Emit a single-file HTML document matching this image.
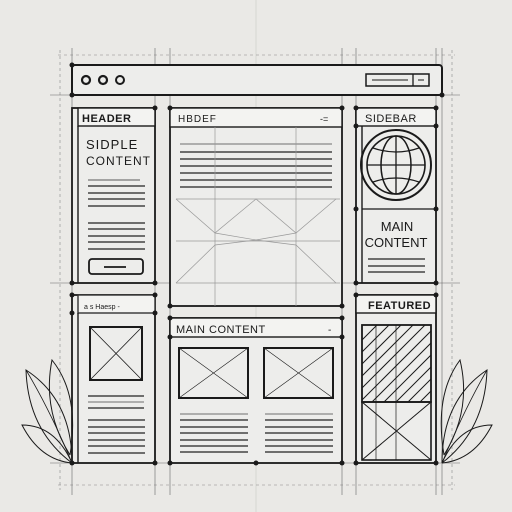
<!DOCTYPE html>
<html><head><meta charset="utf-8"><style>
html,body{margin:0;padding:0;background:#eae9e6}
svg{display:block}
text{font-family:"Liberation Sans",sans-serif;fill:#1a1a1a}
</style></head><body>
<svg width="512" height="512" viewBox="0 0 512 512" xmlns="http://www.w3.org/2000/svg">
<rect width="512" height="512" fill="#eae9e6"/>
<g stroke="#d2d1ce" stroke-width="0.8">
<line x1="256" y1="0" x2="256" y2="512"/>
</g>
<g stroke="#888" stroke-width="0.6" stroke-dasharray="3,3" fill="none">
<line x1="58" y1="55" x2="455" y2="55"/><line x1="58" y1="485" x2="455" y2="485"/>
<line x1="60" y1="50" x2="60" y2="490"/><line x1="452" y1="50" x2="452" y2="490"/>
</g>
<g stroke="#666" stroke-width="0.6" fill="none">
<line x1="72" y1="48" x2="72" y2="495"/><line x1="442" y1="48" x2="442" y2="495"/>
<line x1="170" y1="48" x2="170" y2="495"/><line x1="342" y1="48" x2="342" y2="495"/>
<line x1="356" y1="48" x2="356" y2="495"/><line x1="436" y1="48" x2="436" y2="495"/>
<line x1="155" y1="48" x2="155" y2="495"/>
<line x1="50" y1="95" x2="460" y2="95"/><line x1="50" y1="283" x2="460" y2="283"/>
<line x1="50" y1="463" x2="460" y2="463"/>
</g>
<g stroke="#1a1a1a" fill="none">
<rect x="72" y="65" width="370" height="30" rx="3" stroke-width="2" fill="#ededeb"/>
<circle cx="86" cy="80" r="4" stroke-width="2.2"/><circle cx="103" cy="80" r="4" stroke-width="2.2"/><circle cx="120" cy="80" r="4" stroke-width="2"/>
<rect x="366" y="74" width="63" height="12" stroke-width="1.5"/><line x1="413" y1="74" x2="413" y2="86" stroke-width="1.3"/>
<line x1="372" y1="80" x2="408" y2="80"/><line x1="418" y1="80" x2="424" y2="80"/>
</g>
<g stroke="#1a1a1a" stroke-width="1.8" fill="#ededeb">
<rect x="72" y="108" width="83" height="175"/>
<rect x="170" y="108" width="172" height="198"/>
<rect x="356" y="108" width="80" height="175"/>
<rect x="72" y="295" width="83" height="168"/>
<rect x="170" y="318" width="172" height="145"/>
<rect x="356" y="295" width="80" height="168"/>
</g>
<g stroke="#1a1a1a" stroke-width="1.4" fill="#f3f3f1">
<rect x="78" y="108" width="77" height="18"/>
<rect x="170" y="108" width="172" height="19"/>
<rect x="356" y="108" width="80" height="18"/>
<rect x="78" y="295" width="77" height="18" stroke="#333"/>
<rect x="170" y="318" width="172" height="19"/>
<rect x="356" y="295" width="80" height="18"/>
</g>
<g stroke="#1a1a1a" stroke-width="1.4"><line x1="78" y1="126" x2="78" y2="283"/><line x1="78" y1="313" x2="78" y2="463"/><line x1="362" y1="126" x2="362" y2="283"/></g>
<text x="82" y="122" font-size="11" font-weight="bold" letter-spacing="0.5">HEADER</text>
<text x="86" y="149" font-size="13" fill="#444" letter-spacing="1">SIDPLE</text>
<text x="86" y="165" font-size="12" fill="#aaa" letter-spacing="1">CONTENT</text>
<text x="178" y="122" font-size="10" fill="#333" letter-spacing="1">HBDEF</text>
<text x="320" y="122" font-size="9">-=</text>
<text x="365" y="122" font-size="11" letter-spacing="0.5">SIDEBAR</text>
<text x="397" y="231" font-size="13" text-anchor="middle">MAIN</text>
<text x="396" y="247" font-size="13" text-anchor="middle">CONTENT</text>
<text x="84" y="309" font-size="7" fill="#888">a s Haesp    -</text>
<text x="368" y="309" font-size="11" font-weight="bold" letter-spacing="0.5">FEATURED</text>
<text x="176" y="333" font-size="11" letter-spacing="0.5">MAIN CONTENT</text>
<text x="328" y="333" font-size="10">-</text>
<g stroke="#222" stroke-width="1.3">
<line x1="88" y1="180" x2="140" y2="180" stroke="#777"/><line x1="88" y1="186" x2="145" y2="186"/><line x1="88" y1="193" x2="145" y2="193"/><line x1="88" y1="199" x2="145" y2="199"/><line x1="88" y1="206" x2="145" y2="206"/>
<line x1="88" y1="223" x2="145" y2="223"/><line x1="88" y1="229" x2="145" y2="229"/><line x1="88" y1="236" x2="145" y2="236"/><line x1="88" y1="242" x2="145" y2="242"/><line x1="88" y1="249" x2="145" y2="249"/>
</g>
<rect x="89" y="259" width="54" height="15" rx="3" fill="none" stroke="#1a1a1a" stroke-width="1.8"/>
<line x1="104" y1="267" x2="126" y2="267" stroke="#1a1a1a" stroke-width="1.8"/>
<g stroke="#222" stroke-width="1.2">
<line x1="180" y1="144" x2="332" y2="144" stroke="#888"/>
<line x1="180" y1="152" x2="332" y2="152"/><line x1="180" y1="159" x2="332" y2="159"/><line x1="180" y1="166" x2="332" y2="166"/><line x1="180" y1="173" x2="332" y2="173"/><line x1="180" y1="180" x2="332" y2="180"/><line x1="180" y1="187" x2="332" y2="187"/>
</g>
<g stroke="#999" stroke-width="0.7" fill="none">
<line x1="215" y1="127" x2="215" y2="306"/><line x1="296" y1="127" x2="296" y2="306"/>
<line x1="176" y1="199" x2="340" y2="199"/><line x1="176" y1="241" x2="340" y2="241"/><line x1="176" y1="283" x2="340" y2="283"/>
<path d="M176 199 L215 233 L256 199 L296 233 L336 199"/><path d="M176 283 L215 245 L256 240 L296 245 L336 283"/>
<path d="M215 233 L256 240 L296 233"/>
</g>
<g stroke="#1a1a1a" fill="none">
<circle cx="396" cy="165" r="35" stroke-width="2"/><circle cx="396" cy="165" r="29" stroke-width="1.6"/>
<ellipse cx="396" cy="165" rx="15" ry="29" stroke-width="1.5"/>
<line x1="396" y1="136" x2="396" y2="194" stroke-width="1.3"/>
<line x1="367" y1="165" x2="425" y2="165" stroke-width="1.3"/>
<path d="M373 148 Q396 156 419 148" stroke-width="1.2"/><path d="M373 182 Q396 174 419 182" stroke-width="1.2"/>
</g>
<line x1="362" y1="209" x2="436" y2="209" stroke="#1a1a1a" stroke-width="1.3"/>
<g stroke="#222" stroke-width="1.3"><line x1="368" y1="259" x2="425" y2="259"/><line x1="368" y1="266" x2="425" y2="266"/><line x1="368" y1="272" x2="425" y2="272"/></g>
<g stroke="#1a1a1a" fill="none">
<rect x="90" y="327" width="52" height="53" stroke-width="2"/><path d="M90 327 L142 380 M142 327 L90 380" stroke-width="0.8"/>
<rect x="179" y="348" width="69" height="50" stroke-width="2"/><path d="M179 348 L248 398 M248 348 L179 398" stroke-width="0.6"/>
<rect x="264" y="348" width="69" height="50" stroke-width="2"/><path d="M264 348 L333 398 M333 348 L264 398" stroke-width="0.6"/>
</g>
<g stroke="#222" stroke-width="1.2">
<line x1="88" y1="396" x2="144" y2="396"/><line x1="88" y1="402" x2="144" y2="402" stroke="#888"/><line x1="88" y1="408" x2="144" y2="408"/>
<line x1="88" y1="420" x2="145" y2="420"/><line x1="88" y1="427" x2="145" y2="427"/><line x1="88" y1="433" x2="145" y2="433"/><line x1="88" y1="440" x2="145" y2="440"/><line x1="88" y1="446" x2="145" y2="446"/><line x1="88" y1="453" x2="145" y2="453"/>
<line x1="180" y1="414" x2="248" y2="414" stroke="#888"/><line x1="180" y1="420" x2="248" y2="420"/><line x1="180" y1="427" x2="248" y2="427"/><line x1="180" y1="433" x2="248" y2="433"/><line x1="180" y1="440" x2="248" y2="440"/><line x1="180" y1="446" x2="248" y2="446"/><line x1="180" y1="452" x2="248" y2="452"/>
<line x1="265" y1="414" x2="333" y2="414" stroke="#888"/><line x1="265" y1="420" x2="333" y2="420"/><line x1="265" y1="427" x2="333" y2="427"/><line x1="265" y1="433" x2="333" y2="433"/><line x1="265" y1="440" x2="333" y2="440"/><line x1="265" y1="446" x2="333" y2="446"/><line x1="265" y1="452" x2="333" y2="452"/>
</g>
<g stroke="#1a1a1a" fill="none">
<rect x="362" y="325" width="69" height="77" stroke-width="1.8"/>
<rect x="362" y="402" width="69" height="58" stroke-width="1.6"/>
<path d="M362 402 L431 460 M431 402 L362 460" stroke-width="1"/>
<line x1="376" y1="325" x2="376" y2="460" stroke-width="0.7"/><line x1="396" y1="325" x2="396" y2="460" stroke-width="0.7"/>
</g>
<clipPath id="h"><rect x="362" y="325" width="69" height="77"/></clipPath>
<g clip-path="url(#h)" stroke="#1a1a1a" stroke-width="1">
<path d="M362 340 L377 325 M362 352 L389 325 M362 364 L401 325 M362 376 L413 325 M362 388 L425 325 M362 400 L437 325 M372 402 L449 325 M384 402 L461 325 M396 402 L473 325 M408 402 L485 325 M420 402 L497 325"/>
</g>
<g fill="#1a1a1a">
<circle cx="72" cy="65" r="2.5"/><circle cx="72" cy="95" r="2.5"/><circle cx="442" cy="95" r="2.5"/>
<circle cx="155" cy="108" r="2.5"/><circle cx="170" cy="108" r="2.5"/><circle cx="342" cy="108" r="2.5"/><circle cx="356" cy="108" r="2.5"/><circle cx="436" cy="108" r="2.5"/>
<circle cx="72" cy="283" r="2.5"/><circle cx="155" cy="283" r="2.5"/><circle cx="356" cy="126" r="2.5"/><circle cx="436" cy="126" r="2.5"/>
<circle cx="356" cy="209" r="2.5"/><circle cx="436" cy="209" r="2.5"/><circle cx="356" cy="283" r="2.5"/><circle cx="436" cy="283" r="2.5"/>
<circle cx="170" cy="306" r="2.5"/><circle cx="342" cy="306" r="2.5"/><circle cx="72" cy="295" r="2.5"/><circle cx="155" cy="295" r="2.5"/>
<circle cx="72" cy="313" r="2.5"/><circle cx="155" cy="313" r="2.5"/><circle cx="356" cy="295" r="2.5"/><circle cx="436" cy="295" r="2.5"/>
<circle cx="170" cy="318" r="2.5"/><circle cx="342" cy="318" r="2.5"/><circle cx="170" cy="337" r="2.5"/><circle cx="342" cy="337" r="2.5"/>
<circle cx="72" cy="463" r="2.5"/><circle cx="155" cy="463" r="2.5"/><circle cx="170" cy="463" r="2.5"/><circle cx="256" cy="463" r="2.5"/><circle cx="342" cy="463" r="2.5"/><circle cx="356" cy="463" r="2.5"/><circle cx="436" cy="463" r="2.5"/>
</g>
<g stroke="#1a1a1a" stroke-width="1" fill="none">
<path d="M72 463 Q72 400 26 370 Q28 430 72 463"/><path d="M72 463 Q50 410 26 370" stroke-width="0.8"/>
<path d="M70 455 Q80 395 52 360 Q42 410 70 455"/>
<path d="M72 463 Q55 425 22 425 Q40 460 72 463"/>
<path d="M442 463 Q442 400 487 370 Q485 430 442 463"/><path d="M442 463 Q464 410 487 370" stroke-width="0.8"/>
<path d="M444 455 Q434 395 460 360 Q472 410 444 455"/>
<path d="M442 463 Q459 425 492 425 Q474 460 442 463"/>
</g>
</svg>
</body></html>
